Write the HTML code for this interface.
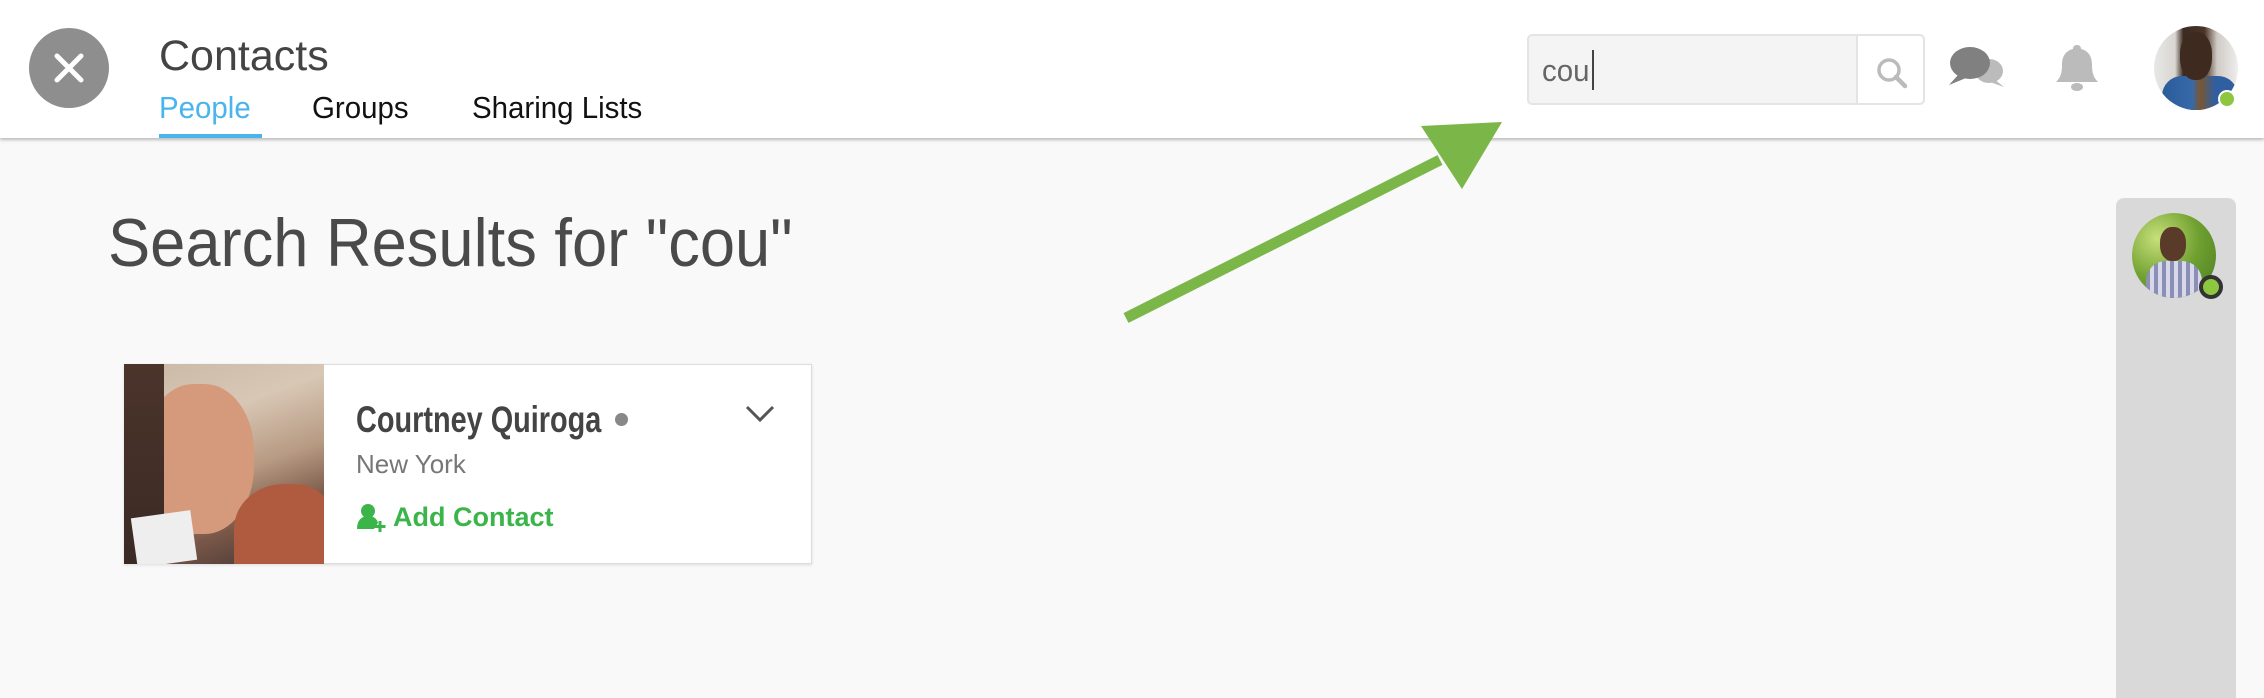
<!DOCTYPE html>
<html><head><meta charset="utf-8"><style>
*{margin:0;padding:0;box-sizing:border-box}
body{width:2264px;height:692px;overflow:hidden;background:#f9f9f9;font-family:"Liberation Sans",sans-serif;position:relative}
.hdr{position:absolute;left:0;top:0;width:2264px;height:138px;background:#fff;box-shadow:0 2px 3px rgba(0,0,0,.25);z-index:2}
.abs{position:absolute}
.cond{transform-origin:left top;white-space:nowrap}
</style></head><body>
<div class="hdr">
  <div class="abs" style="left:29px;top:28px;width:80px;height:80px;border-radius:50%;background:#8e8e8e"></div>
  <svg class="abs" style="left:29px;top:28px" width="80" height="80"><path d="M28 28L52 52M52 28L28 52" stroke="#fff" stroke-width="5" stroke-linecap="round"/></svg>
  <div class="abs cond" style="left:159px;top:32px;font-size:43px;color:#444;transform:scaleX(1)">Contacts</div>
  <div class="abs cond" style="left:159px;top:90px;font-size:31px;color:#4ab4ec;transform:scaleX(.95)">People</div>
  <div class="abs" style="left:159px;top:134px;width:103px;height:4px;background:#4ab4ec"></div>
  <div class="abs cond" style="left:312px;top:90px;font-size:31px;color:#111;transform:scaleX(.95)">Groups</div>
  <div class="abs cond" style="left:472px;top:90px;font-size:31px;color:#111;transform:scaleX(.95)">Sharing Lists</div>
  <div class="abs" style="left:1527px;top:34px;width:398px;height:71px;border:2px solid #e4e4e4;border-radius:5px;background:#f4f4f4"></div>
  <div class="abs" style="left:1856px;top:36px;width:67px;height:67px;background:#fff;border-left:2px solid #e4e4e4;border-radius:0 4px 4px 0"></div>
  <div class="abs cond" style="left:1542px;top:53px;font-size:31px;color:#666;transform:scaleX(.95)">cou</div>
  <div class="abs" style="left:1592px;top:50px;width:2px;height:40px;background:#444"></div>
  <svg class="abs" style="left:1874px;top:55px" width="36" height="36"><circle cx="15" cy="15" r="10" fill="none" stroke="#bbb" stroke-width="3.5"/><path d="M22 22L31 31" stroke="#bbb" stroke-width="4.5" stroke-linecap="round"/></svg>
  <svg class="abs" style="left:1946px;top:45px" width="64" height="46"><ellipse cx="43" cy="26" rx="14" ry="12" fill="#bbb"/><path d="M48 34L58 42L44 37Z" fill="#bbb"/><ellipse cx="24" cy="18" rx="20" ry="16" fill="#808080"/><path d="M12 30L3 40L20 33Z" fill="#808080"/></svg>
  <svg class="abs" style="left:2053px;top:42px" width="48" height="52"><path d="M24 3c-3 0-4 2-4 4c-8 2-11 8-11 16c0 9-2 13-6 17h42c-4-4-6-8-6-17c0-8-3-14-11-16c0-2-1-4-4-4z" fill="#bbb"/><ellipse cx="24" cy="45" rx="6" ry="4" fill="#bbb"/></svg>
  <div class="abs" style="left:2154px;top:26px;width:84px;height:84px;border-radius:50%;overflow:hidden;background:linear-gradient(90deg,#e8e8e6 0,#d9d6d2 25%,#3b2a22 35%,#4a3426 60%,#cfcac4 75%,#eee 100%)">
    <div class="abs" style="left:8px;top:50px;width:76px;height:40px;background:linear-gradient(90deg,#2b5c9a,#3768a8 40%,#7a5630 50%,#2f5fa0 70%);border-radius:20px 20px 0 0"></div>
    <div class="abs" style="left:26px;top:6px;width:32px;height:48px;border-radius:45%;background:#3e2a1f"></div>
  </div>
  <div class="abs" style="left:2218px;top:90px;width:18px;height:18px;border-radius:50%;background:#8dc63f;border:2px solid #fff"></div>
</div>

<div class="abs cond" style="left:108px;top:204px;font-size:68px;color:#4a4a4a;transform:scaleX(.93)">Search Results for "cou"</div>

<svg class="abs" style="left:0;top:0;z-index:3" width="2264" height="692"><path d="M1126 318L1440 160" stroke="#7ab648" stroke-width="11" stroke-linecap="butt"/><path d="M1502 122L1421 126L1462 189Z" fill="#7ab648"/></svg>

<div class="abs" style="left:124px;top:364px;width:688px;height:200px;background:#fff;border:1px solid #ddd;box-shadow:0 1px 3px rgba(0,0,0,.12)"></div>
<div class="abs" style="left:124px;top:364px;width:200px;height:200px;overflow:hidden;background:linear-gradient(160deg,#c9b8a4 0,#d8c7b5 30%,#b79a82 55%,#7a5848 75%,#3a3030 100%)">
  <div class="abs" style="left:20px;top:20px;width:110px;height:150px;border-radius:45%;background:#d59a7c"></div>
  <div class="abs" style="left:0;top:0;width:40px;height:200px;background:linear-gradient(#4b342a,#3a2a25)"></div>
  <div class="abs" style="left:110px;top:120px;width:100px;height:90px;border-radius:50% 40% 0 0;background:#b05a40"></div>
  <div class="abs" style="left:10px;top:150px;width:60px;height:50px;background:#eee;transform:rotate(-8deg)"></div>
</div>
<div class="abs cond" style="left:356px;top:399px;font-size:37px;font-weight:bold;color:#444;transform:scaleX(.78)">Courtney Quiroga</div>
<div class="abs" style="left:615px;top:413px;width:13px;height:13px;border-radius:50%;background:#888"></div>
<svg class="abs" style="left:744px;top:404px" width="32" height="20"><path d="M3 3L16 16L29 3" fill="none" stroke="#555" stroke-width="3"/></svg>
<div class="abs cond" style="left:356px;top:449px;font-size:26px;color:#777;transform:scaleX(1)">New York</div>
<svg class="abs" style="left:356px;top:503px" width="32" height="30"><circle cx="12" cy="8" r="7" fill="#3bb54a"/><path d="M1 26c0-9 5-13 11-13s9 3 10 7l-4 6z" fill="#3bb54a"/><path d="M24 18v11M18.5 23.5h11" stroke="#3bb54a" stroke-width="3"/></svg>
<div class="abs cond" style="left:393px;top:502px;font-size:27px;font-weight:bold;color:#3bb54a;transform:scaleX(1)">Add Contact</div>

<div class="abs" style="left:2116px;top:198px;width:120px;height:500px;background:#d9d9d9;border-radius:8px 8px 0 0"></div>
<div class="abs" style="left:2132px;top:213px;width:84px;height:85px;border-radius:50%;overflow:hidden;background:radial-gradient(circle at 30% 30%,#c8e07a,#6fa030 50%,#4a7a22)">
  <div class="abs" style="left:28px;top:14px;width:26px;height:34px;border-radius:45%;background:#5a3a28"></div>
  <div class="abs" style="left:14px;top:48px;width:56px;height:40px;border-radius:20px 20px 0 0;background:repeating-linear-gradient(90deg,#8a8fb8 0 4px,#d8d8e8 4px 8px)"></div>
</div>
<div class="abs" style="left:2199px;top:275px;width:24px;height:24px;border-radius:50%;background:#8dc63f;border:4px solid #333"></div>
</body></html>
